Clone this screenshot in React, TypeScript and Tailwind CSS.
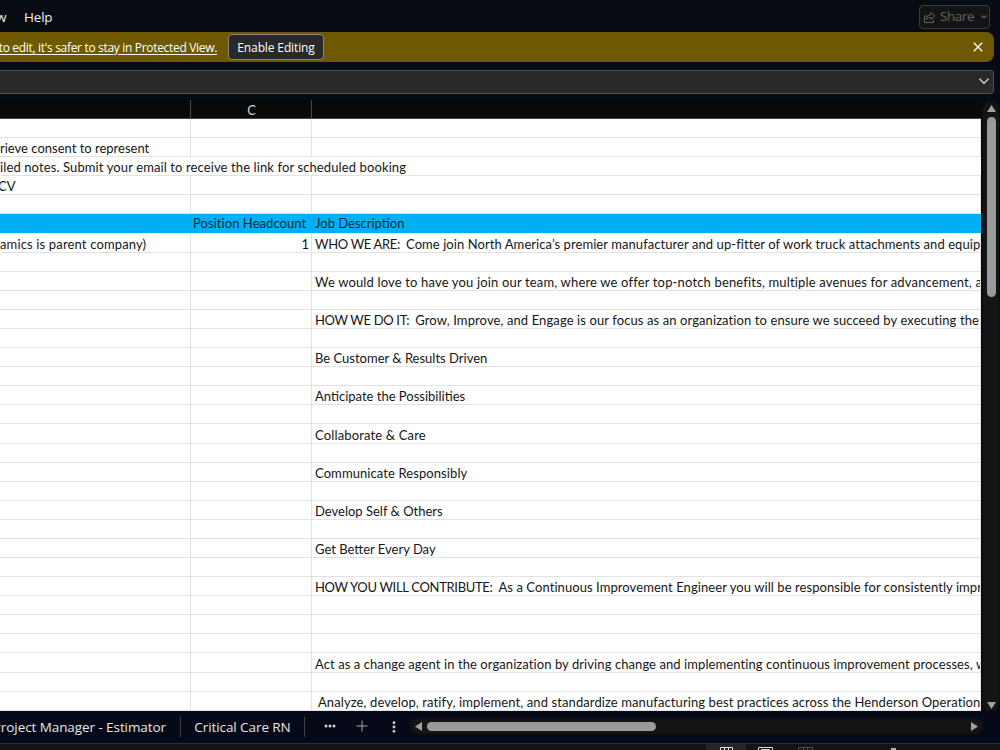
type Row = { h: number; b?: string; c?: string; lead?: string; d?: string; track?: string; header?: boolean; spill?: boolean }

const rows: Row[] = [
  { h: 19 },
  { h: 19, b: 'rieve consent to represent' },
  { h: 19, b: 'iled notes. Submit your email to receive the link for scheduled booking', spill: true, track: 'tracking-[0.11px]' },
  { h: 19, b: 'CV' },
  { h: 19 },
  { h: 19, c: 'Position Headcount', d: 'Job Description', header: true },
  { h: 20, b: 'amics is parent company)', c: '1', lead: 'WHO WE ARE:  ', d: 'Come join North America’s premier manufacturer and up-fitter of work truck attachments and equipment', track: 'tracking-[0.07px]' },
  { h: 19 },
  { h: 19, d: 'We would love to have you join our team, where we offer top-notch benefits, multiple avenues for advancement, and', track: 'tracking-[0.16px]' },
  { h: 19 },
  { h: 19, lead: 'HOW WE DO IT:  ', d: 'Grow, Improve, and Engage is our focus as an organization to ensure we succeed by executing the', track: 'tracking-[0.1px]' },
  { h: 19 },
  { h: 19, d: 'Be Customer & Results Driven' },
  { h: 19 },
  { h: 19, d: 'Anticipate the Possibilities' },
  { h: 19 },
  { h: 20, d: 'Collaborate & Care', track: 'tracking-[0.15px]' },
  { h: 19 },
  { h: 19, d: 'Communicate Responsibly', track: 'tracking-[0.09px]' },
  { h: 19 },
  { h: 19, d: 'Develop Self & Others' },
  { h: 19 },
  { h: 19, d: 'Get Better Every Day' },
  { h: 19 },
  { h: 19, lead: 'HOW YOU WILL CONTRIBUTE:  ', d: 'As a Continuous Improvement Engineer you will be responsible for consistently improving', track: 'tracking-[0.07px]' },
  { h: 19 },
  { h: 19 },
  { h: 19 },
  { h: 20, d: 'Act as a change agent in the organization by driving change and implementing continuous improvement processes, which', track: 'tracking-[0.08px]' },
  { h: 19 },
  { h: 19, d: ' Analyze, develop, ratify, implement, and standardize manufacturing best practices across the Henderson Operations', track: 'tracking-[0.1px]' },
]

function MenuBar() {
  return (
    <header className="flex h-8 shrink-0 items-start justify-between pr-[10px] text-[13.5px] tracking-[-0.2px] text-[#f0f0f0]">
      <div className="flex pt-[7px] leading-5">
        <span className="w-6 -indent-1">w</span>
        <span>Help</span>
      </div>
      <button className="mt-[5px] flex h-6 w-[71px] items-center rounded-[4px] border border-[#3c3c3c] bg-[#141414] pl-[3px] text-[#626262]">
        <svg className="h-[13px] w-[13px]" viewBox="0 0 13 13" fill="none" stroke="currentColor" strokeLinejoin="round">
          <path d="M4.5 5H1.5V11.5H10.5V9" />
          <path d="M8 1.5L12 5L8 8.5V6.5C6 6.3 4.5 7 3.5 8.7C3.7 5.8 5.3 3.8 8 3.5Z" />
        </svg>
        <span className="-mt-px ml-[4px] tracking-[-0.45px]">Share</span>
        <svg className="ml-[7px] h-[6px] w-[6px]" viewBox="0 0 6 6" fill="none" stroke="currentColor" strokeWidth="1.2">
          <path d="M0.5 1.5L3 4L5.5 1.5" />
        </svg>
      </button>
    </header>
  )
}

function ProtectedViewBar() {
  return (
    <div className="mr-[6px] flex h-[30px] shrink-0 items-center rounded-r-[8px] bg-[#6f5900] text-[12px] text-white">
      <span className="flex w-[217px] shrink-0 justify-end pt-px tracking-[-0.32px] whitespace-nowrap underline underline-offset-2">
        to edit, it's safer to stay in Protected View.
      </span>
      <button className="ml-[11px] h-[26px] w-24 rounded-[4px] border border-[#858585] bg-[#292929] pt-px tracking-[-0.13px] whitespace-nowrap">
        Enable Editing
      </button>
      <svg className="mr-[11px] ml-auto h-[10px] w-[10px]" viewBox="0 0 10 10" stroke="white" strokeWidth="1.3">
        <path d="M0.8 0.8L9.2 9.2M9.2 0.8L0.8 9.2" />
      </svg>
    </div>
  )
}

function FormulaBar() {
  return (
    <div className="mt-2 mr-[6px] flex h-6 shrink-0 items-center justify-end rounded-r-[4px] border border-l-0 border-[#505050] bg-[#292929] pr-[4px]">
      <svg className="mb-[2px] h-[10px] w-[10px]" viewBox="0 0 10 10" fill="none" stroke="#d0d0d0" strokeWidth="1.4">
        <path d="M0.5 2.8L5 7.2L9.5 2.8" />
      </svg>
    </div>
  )
}

function Sheet() {
  return (
    <div className="w-[981px] overflow-hidden bg-white">
      <div className="flex h-[19px] border-b border-[#444] bg-[#0a0a0a] text-[13px] text-[#d4d4d4]">
        <div className="w-[191px] border-r border-[#4a4a4a]" />
        <div className="w-[121px] border-r border-[#4a4a4a] pl-px text-center font-['Lato'] leading-5">C</div>
      </div>
      <div className="font-['Lato',sans-serif] text-[13px] text-[#161616]">
        {rows.map((row, i) => (
          <div
            key={i}
            style={{ height: row.h }}
            className={row.header ? 'flex bg-[#00b0f4] text-[#082b3c]' : 'flex'}
          >
            <Cell className="w-[191px]" row={row}>
              <span className={row.c ? 'tracking-[0.15px]' : row.b === 'CV' ? '-ml-[2px]' : row.track}>{row.b}</span>
            </Cell>
            <Cell className={row.c === '1' ? 'w-[121px] pr-[2px] text-right' : 'w-[121px] pl-[2px] tracking-[0.06px]'} row={row}>{row.c}</Cell>
            <Cell className="w-[669px] overflow-hidden pl-[3px]" row={row}>
              {row.lead && <span className="tracking-[-0.32px]">{row.lead}</span>}
              <span className={row.track}>{row.d}</span>
            </Cell>
          </div>
        ))}
      </div>
    </div>
  )
}

function Cell({ className, row, children }: { className: string; row: Row; children?: React.ReactNode }) {
  const border = row.header ? '' : row.spill ? 'border-b border-[#e2e2e2]' : 'border-r border-b border-[#e2e2e2]'
  const leading = row.header ? 'leading-[18px]' : row.h === 20 ? 'leading-[22px]' : 'leading-[20px]'
  return <div className={`shrink-0 whitespace-pre ${leading} ${border} ${className}`}>{children}</div>
}

function VerticalScrollbar() {
  return (
    <div className="mt-[1px] ml-[2px] flex h-[611px] w-[16px] flex-col items-center rounded-[8px] bg-[#141414] pt-[4px] pb-[3px]">
      <svg className="h-[7px] w-[9px]" viewBox="0 0 9 7" fill="#a0a0a0"><path d="M4.5 0L9 7H0Z" /></svg>
      <div className="mt-[5px] h-[180px] w-[9px] rounded-full bg-[#9a9a9a]" />
      <svg className="mt-auto h-[7px] w-[9px]" viewBox="0 0 9 7" fill="#a0a0a0"><path d="M4.5 7L9 0H0Z" /></svg>
    </div>
  )
}

function SheetTabs() {
  return (
    <div className="flex h-[32px] shrink-0 items-center bg-[#060a18] text-[13.5px] text-[#e6e6e6]">
      <div className="flex w-[181px] shrink-0 justify-end border-r border-[#414141] pr-[14px] leading-5 tracking-[-0.08px] whitespace-nowrap">Project Manager - Estimator</div>
      <div className="flex w-[124px] shrink-0 justify-center border-r border-[#414141] leading-5 tracking-[-0.08px] whitespace-nowrap">Critical Care RN</div>
      <svg className="-mt-[2px] ml-[19px] h-[4px] w-[12px]" viewBox="0 0 12 4" fill="#d0d0d0">
        <circle cx="2" cy="2" r="1.5" /><circle cx="6" cy="2" r="1.5" /><circle cx="10" cy="2" r="1.5" />
      </svg>
      <svg className="-mt-[2px] ml-[20px] h-[12px] w-[12px]" viewBox="0 0 12 12" stroke="#a8a8a8"><path d="M6 0.5V11.5M0.5 6H11.5" /></svg>
      <svg className="ml-[24px] h-[12px] w-[4px]" viewBox="0 0 4 12" fill="#d0d0d0">
        <circle cx="2" cy="1.7" r="1.4" /><circle cx="2" cy="6" r="1.4" /><circle cx="2" cy="10.3" r="1.4" />
      </svg>
      <div className="-mt-[2px] ml-[14px] flex h-[16px] w-[573px] items-center rounded-full bg-[#141414] pr-[5px] pl-[5px]">
        <svg className="h-[9px] w-[7px]" viewBox="0 0 7 9" fill="#a0a0a0"><path d="M0 4.5L7 0V9Z" /></svg>
        <div className="ml-[5px] h-[9px] w-[229px] rounded-full bg-[#9a9a9a]" />
        <svg className="ml-auto h-[9px] w-[7px]" viewBox="0 0 7 9" fill="#a0a0a0"><path d="M7 4.5L0 0V9Z" /></svg>
      </div>
    </div>
  )
}

function StatusBar() {
  return (
    <footer className="flex h-[7px] shrink-0 overflow-hidden border-t border-[#303030] bg-[#141414] pl-[706px]">
      <div className="flex h-[6px] w-10 justify-center bg-[#252525] pt-[3px]">
        <svg className="h-[3px] w-[13px]" viewBox="0 0 13 3" fill="none" stroke="#e0e0e0"><path d="M0.5 3V0.5H12.5V3M4.5 0V3M8.5 0V3" /></svg>
      </div>
      <svg className="mt-[3px] ml-[12px] h-[3px] w-[15px]" viewBox="0 0 15 3" fill="none" stroke="#d8d8d8"><path d="M0.5 3V0.5H14.5V3M3.5 3V2.5H11.5V3" /></svg>
      <svg className="mt-[3px] ml-[25px] h-[3px] w-[15px]" viewBox="0 0 15 3" fill="none" stroke="#4c4c4c"><path d="M0.5 3V0.5H14.5V3M5.5 0V3M9.5 0V3" /></svg>
      <div className="mt-[4px] ml-[78px] h-[2px] w-[5px] bg-[#b0b0b0]" />
    </footer>
  )
}

export default function App() {
  return (
    <div className="flex h-[750px] w-[1000px] flex-col overflow-hidden bg-[#070b12] font-['Open_Sans',sans-serif]">
      <MenuBar />
      <ProtectedViewBar />
      <FormulaBar />
      <div className="mt-[6px] flex h-[611px] shrink-0">
        <Sheet />
        <VerticalScrollbar />
      </div>
      <SheetTabs />
      <StatusBar />
    </div>
  )
}
